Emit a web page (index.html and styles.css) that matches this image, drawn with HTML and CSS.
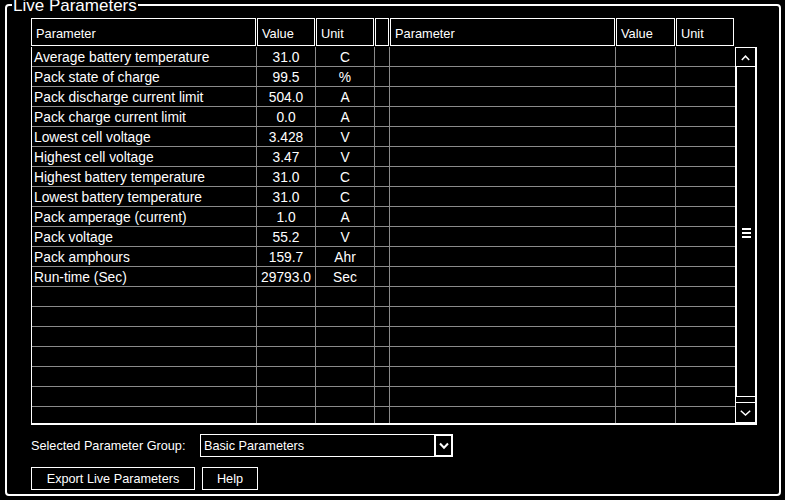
FILE: index.html
```html
<!DOCTYPE html>
<html>
<head>
<meta charset="utf-8">
<link rel="stylesheet" href="styles.css">
</head>
<body>
<div class="page">
<fieldset class="group">
<legend class="group-title">Live Parameters</legend>
<div class="panel">
  <div class="thead">
    <div class="th w1">Parameter</div>
    <div class="th w2">Value</div>
    <div class="th w3">Unit</div>
    <div class="th w4"></div>
    <div class="th w5">Parameter</div>
    <div class="th w6">Value</div>
    <div class="th w7">Unit</div>
  </div>
  <div class="tbody">
    <div class="grid">
      <div class="td">Average battery temperature</div><div class="td ctr">31.0</div><div class="td ctr">C</div><div class="td"></div><div class="td"></div><div class="td"></div><div class="td"></div>
      <div class="td">Pack state of charge</div><div class="td ctr">99.5</div><div class="td ctr">%</div><div class="td"></div><div class="td"></div><div class="td"></div><div class="td"></div>
      <div class="td">Pack discharge current limit</div><div class="td ctr">504.0</div><div class="td ctr">A</div><div class="td"></div><div class="td"></div><div class="td"></div><div class="td"></div>
      <div class="td">Pack charge current limit</div><div class="td ctr">0.0</div><div class="td ctr">A</div><div class="td"></div><div class="td"></div><div class="td"></div><div class="td"></div>
      <div class="td">Lowest cell voltage</div><div class="td ctr">3.428</div><div class="td ctr">V</div><div class="td"></div><div class="td"></div><div class="td"></div><div class="td"></div>
      <div class="td">Highest cell voltage</div><div class="td ctr">3.47</div><div class="td ctr">V</div><div class="td"></div><div class="td"></div><div class="td"></div><div class="td"></div>
      <div class="td">Highest battery temperature</div><div class="td ctr">31.0</div><div class="td ctr">C</div><div class="td"></div><div class="td"></div><div class="td"></div><div class="td"></div>
      <div class="td">Lowest battery temperature</div><div class="td ctr">31.0</div><div class="td ctr">C</div><div class="td"></div><div class="td"></div><div class="td"></div><div class="td"></div>
      <div class="td">Pack amperage (current)</div><div class="td ctr">1.0</div><div class="td ctr">A</div><div class="td"></div><div class="td"></div><div class="td"></div><div class="td"></div>
      <div class="td">Pack voltage</div><div class="td ctr">55.2</div><div class="td ctr">V</div><div class="td"></div><div class="td"></div><div class="td"></div><div class="td"></div>
      <div class="td">Pack amphours</div><div class="td ctr">159.7</div><div class="td ctr">Ahr</div><div class="td"></div><div class="td"></div><div class="td"></div><div class="td"></div>
      <div class="td">Run-time (Sec)</div><div class="td ctr">29793.0</div><div class="td ctr">Sec</div><div class="td"></div><div class="td"></div><div class="td"></div><div class="td"></div>
      <div class="td"></div><div class="td"></div><div class="td"></div><div class="td"></div><div class="td"></div><div class="td"></div><div class="td"></div>
      <div class="td"></div><div class="td"></div><div class="td"></div><div class="td"></div><div class="td"></div><div class="td"></div><div class="td"></div>
      <div class="td"></div><div class="td"></div><div class="td"></div><div class="td"></div><div class="td"></div><div class="td"></div><div class="td"></div>
      <div class="td"></div><div class="td"></div><div class="td"></div><div class="td"></div><div class="td"></div><div class="td"></div><div class="td"></div>
      <div class="td"></div><div class="td"></div><div class="td"></div><div class="td"></div><div class="td"></div><div class="td"></div><div class="td"></div>
      <div class="td"></div><div class="td"></div><div class="td"></div><div class="td"></div><div class="td"></div><div class="td"></div><div class="td"></div>
      <div class="td"></div><div class="td"></div><div class="td"></div><div class="td"></div><div class="td"></div><div class="td"></div><div class="td"></div>
    </div>
    <div class="vscroll">
      <div class="sb-btn sb-up">
        <svg width="9" height="6" viewBox="0 0 9 6"><polyline points="0.8,5 4.5,1.2 8.2,5" fill="none" stroke="#fff" stroke-width="1.5"/></svg>
      </div>
      <div class="sb-thumb">
        <div class="grip"><span></span><span></span><span></span></div>
      </div>
      <div class="sb-track"></div>
      <div class="sb-btn sb-down">
        <svg width="11" height="6" viewBox="0 0 11 6"><polyline points="0.8,0.8 5.5,5 10.2,0.8" fill="none" stroke="#fff" stroke-width="1.5"/></svg>
      </div>
    </div>
  </div>
  <div class="group-select">
    <span class="label">Selected Parameter Group:</span>
    <div class="combo">
      <span class="combo-text">Basic Parameters</span>
      <span class="combo-btn">
        <svg width="10" height="8" viewBox="0 0 10 8"><polyline points="1,1.5 5,5.8 9,1.5" fill="none" stroke="#fff" stroke-width="2"/></svg>
      </span>
    </div>
  </div>
  <div class="actions">
    <div class="btn btn-export">Export Live Parameters</div>
    <div class="btn btn-help">Help</div>
  </div>
</div>
</fieldset>
</div>
</body>
</html>
```

FILE: styles.css
```css
html, body {
  margin: 0;
  padding: 0;
  background: #000;
  color: #fff;
  font-family: "Liberation Sans", Arial, sans-serif;
}

.page {
  padding: 0 4px 4px 5px;
  width: 785px;
  height: 500px;
  box-sizing: border-box;
}

.group {
  margin: 0;
  padding: 0;
  border: 2px solid #fff;
  border-radius: 4px;
  height: 496px;
  box-sizing: border-box;
  min-inline-size: 0;
}

.group-title {
  margin-left: 5px;
  padding: 0 1px;
  font-size: 17px;
  line-height: 12px;
  height: 10px;
}

.panel {
  padding: 8px 0 0 24px;
}

.thead {
  display: flex;
  gap: 1px;
  height: 28px;
}

.th {
  box-sizing: border-box;
  height: 28px;
  border: 1px solid #fff;
  font-size: 12.8px;
  padding: 3px 0 0 4px;
  display: flex;
  align-items: center;
}

.w1 { width: 225px; }
.w2 { width: 58px; }
.w3 { width: 58px; }
.w4 { width: 14px; }
.w5 { width: 225px; }
.w6 { width: 59px; }
.w7 { width: 58px; }

.tbody {
  display: flex;
  margin-top: 1px;
  width: 726px;
  height: 378px;
  box-sizing: border-box;
  border-left: 1px solid #fff;
  border-bottom: 2px solid #fff;
}

.grid {
  display: grid;
  grid-template-columns: 225px 59px 59px 15px 226px 60px 59px;
  grid-auto-rows: 20px;
  width: 703px;
  height: 376px;
  overflow: hidden;
}

.td {
  box-sizing: border-box;
  border-right: 1px solid #8a8a8a;
  border-bottom: 1px solid #8a8a8a;
  font-size: 13.8px;
  line-height: 21px;
  padding-left: 2px;
  white-space: nowrap;
  overflow: hidden;
}

.td:nth-child(7n) {
  border-right: none;
}

.ctr {
  text-align: center;
  padding-left: 0;
}

.vscroll {
  width: 22px;
  height: 376px;
  display: flex;
  flex-direction: column;
}

.sb-btn {
  box-sizing: border-box;
  border: 1px solid #fff;
  border-right-width: 2px;
  display: flex;
  align-items: center;
  justify-content: center;
}

.sb-up {
  height: 20px;
  padding-top: 2px;
}

.sb-down {
  height: 21px;
  padding-top: 1px;
}

.sb-thumb {
  box-sizing: border-box;
  height: 330px;
  border-left: 2px solid #fff;
  border-right: 2px solid #fff;
  border-bottom: 1px solid #fff;
  display: flex;
  align-items: center;
  justify-content: center;
}

.grip {
  display: flex;
  flex-direction: column;
  gap: 2px;
  width: 9px;
  margin-top: 2px;
}

.grip span {
  display: block;
  height: 2px;
  background: #fff;
}

.sb-track {
  box-sizing: border-box;
  height: 5px;
  border-left: 1px solid #fff;
  border-right: 2px solid #fff;
}

.group-select {
  display: flex;
  align-items: center;
  margin-top: 9px;
  height: 23px;
}

.label {
  flex: 0 0 169px;
  font-size: 12.7px;
}

.combo {
  box-sizing: border-box;
  width: 253px;
  height: 23px;
  border: 1px solid #fff;
  display: flex;
  align-items: stretch;
}

.combo-text {
  flex: 1;
  font-size: 12.7px;
  padding-left: 3px;
  display: flex;
  align-items: center;
}

.combo-btn {
  box-sizing: border-box;
  width: 19px;
  margin: -1px -1px -1px 0;
  border: 2px solid #fff;
  display: flex;
  align-items: center;
  justify-content: center;
}

.actions {
  display: flex;
  gap: 7px;
  margin-top: 10px;
}

.btn {
  box-sizing: border-box;
  height: 23px;
  border: 1px solid #fff;
  font-size: 12.7px;
  display: flex;
  align-items: center;
  justify-content: center;
  padding-top: 1px;
}

.btn-export { width: 164px; }
.btn-help { width: 56px; }
```
